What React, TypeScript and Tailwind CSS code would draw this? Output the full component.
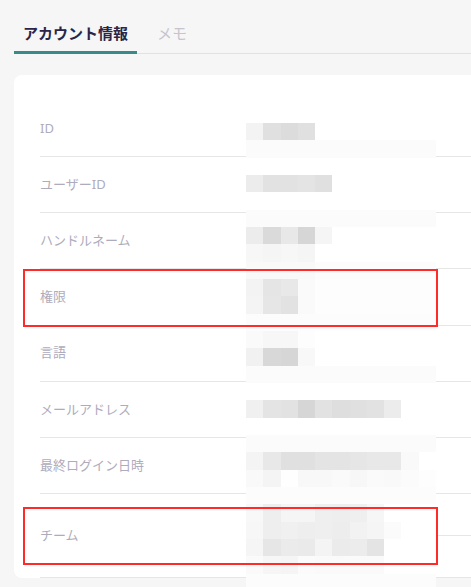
/**
 * Account info panel with pixelated (redacted) values and red highlight boxes.
 */
const rows: { label: string; tall?: boolean }[] = [
  { label: "ID" },
  { label: "ユーザーID" },
  { label: "ハンドルネーム" },
  { label: "権限" },
  { label: "言語" },
  { label: "メールアドレス" },
  { label: "最終ログイン日時" },
  { label: "チーム", tall: true },
];

// Mosaic cells, one string per 17px band; missing = white, otherwise hex greys.
const W = "fff";
const mosaic: string[][] = [
  ["f3f3f3", "e0e0e0", "dcdcdc", "e0e0e0"],
  Array(11).fill("fbfbfb"),
  [],
  ["ececec", "e2e2e2", "e2e2e2", "e4e4e4", "e0e0e0"],
  [],
  Array(11).fill("fbfbfb"),
  ["ececec", "dadada", "e8e8e8", "d6d6d6", "f5f5f5"],
  ["f7f7f7", "f5f5f5", "f7f7f7", "f5f5f5"],
  ["f9f9f9", "f9f9f9", "f9f9f9", "f9f9f9", ...Array(7).fill("fcfcfc")],
  ["f3f3f3", "e5e5e5", "e8e8e8", "fafafa", ...Array(7).fill("fdfdfd")],
  ["f4f4f4", "e6e6e6", "e2e2e2", "fafafa", ...Array(7).fill("fdfdfd")],
  Array(11).fill("fcfcfc"),
  ["fafafa", "f7f7f7", "f7f7f7", "fdfdfd"],
  ["f1f1f1", "d8d8d8", "d6d6d6", "f8f8f8"],
  Array(11).fill("fbfbfb"),
  [],
  ["f0f0f0", "e4e4e4", "e2e2e2", "d6d6d6", "e2e2e2", "dedede", "e0e0e0", "e2e2e2", "ececec"],
  [],
  Array(11).fill("fbfbfb"),
  ["f4f4f4", "e8e8e8", "e0e0e0", "e0e0e0", "e4e4e4", "e4e4e4", "e6e6e6", "e8e8e8", "e8e8e8", "f9f9f9"],
  ["f9f9f9", "f4f4f4", "fefefe", "f8f8f8", "f8f8f8", "fafafa", "f7f7f7", "fafafa", "f9f9f9", "fbfbfb", "fdfdfd"],
  Array(11).fill("fcfcfc"),
  ["f8f8f8", "eeeeee", "f5f5f5", "f5f5f5", "efefef", "eeeeee", "efefef", "f6f6f6"],
  ["f7f7f7", "eeeeee", "f0f0f0", "eeeeee", "efefef", "ededed", "f2f2f2", "f5f5f5", "fbfbfb"],
  ["f5f5f5", "e6e6e6", "ebebeb", "eaeaea", "f4f4f4", "ebebeb", "ececec", "e4e4e4"],
  ["fafafa", "f6f6f6", "f5f5f5", "fbfbfb", "fafafa", "fafafa", "fafafa", "fafafa"],
  Array(11).fill("fcfcfc"),
];

function Mosaic() {
  return (
    <div className="pointer-events-none absolute left-[246px] top-[123px] w-[190px]">
      {mosaic.map((band, r) => (
        <div key={r} className="grid h-[17.33px] grid-cols-11">
          {Array.from({ length: 11 }).map((_, c) => (
            <div
              key={c}
              style={{ backgroundColor: `#${band[c] ?? W}` }}
            />
          ))}
        </div>
      ))}
    </div>
  );
}

export default function App() {
  return (
    <div
      className="relative h-[587px] w-full overflow-hidden bg-[#f6f6f6]"
      style={{ fontFamily: '"Noto Sans", "Noto Sans CJK JP", sans-serif' }}
    >
      {/* Tabs */}
      <div className="flex items-end pl-[14px] pt-[20px]">
        <div className="flex h-[34px] w-[123px] items-start justify-center border-b-[3px] border-[#3a8a8c] pt-[1px]">
          <span className="text-[15px] font-bold leading-[24px] text-[#2b2647]">
            アカウント情報
          </span>
        </div>
        <div className="flex h-[34px] flex-1 items-start border-b border-[#e2e2e2] pl-[20px] pt-[1px]">
          <span className="text-[15px] leading-[24px] text-[#c6c4ce]">メモ</span>
        </div>
      </div>

      {/* Card */}
      <div className="ml-[14px] mt-[21px] w-[480px] rounded-lg bg-white pl-[26px] pt-[26px]">
        {rows.map((row) => (
          <div
            key={row.label}
            className={`relative flex items-center border-b border-[#e6e6e6] ${
              row.tall ? "h-[84px]" : "h-[56.17px]"
            }`}
          >
            <span className="text-[13px] text-[#aeacbc]">{row.label}</span>
            {row.tall && (
              <div className="absolute left-[397px] right-0 top-[41px] h-px bg-[#e6e6e6]" />
            )}
          </div>
        ))}
      </div>

      <Mosaic />

      {/* Highlight boxes */}
      <div className="pointer-events-none absolute left-[23px] top-[269px] h-[58px] w-[415px] border-2 border-[#ff2b2b]" />
      <div className="pointer-events-none absolute left-[23px] top-[507px] h-[58px] w-[415px] border-2 border-[#ff2b2b]" />
    </div>
  );
}
